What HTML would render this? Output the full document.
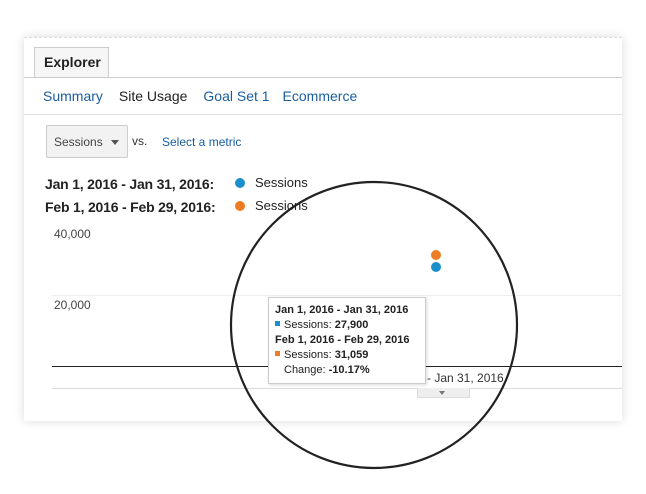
<!DOCTYPE html>
<html><head><style>
body{margin:0;width:646px;height:494px;background:#fff;font-family:"Liberation Sans",sans-serif;position:relative;overflow:hidden}
.a{position:absolute}
.card{left:24px;top:37px;width:598px;height:383px;background:#fff;box-shadow:0 0 10px rgba(0,0,0,.15);border-top:1px dashed #ddd}
.b{font-weight:bold;color:#222}
.lk{color:#1a5ea0}
</style></head><body>
<div class="a card"></div>
<div class="a" style="left:34px;top:47px;width:73px;height:30px;border:1px solid #ccc;border-bottom:none;background:#f6f6f6"></div>
<div class="a b" style="left:44px;top:54px;font-size:14px">Explorer</div>
<div class="a" style="left:24px;top:77px;width:598px;border-top:1px solid #ccc"></div>
<div class="a" style="left:43px;top:88px;font-size:14px"><span class="lk">Summary</span><span style="margin-left:16px;color:#222">Site Usage</span><span class="lk" style="margin-left:16px">Goal Set 1</span><span class="lk" style="margin-left:13px">Ecommerce</span></div>
<div class="a" style="left:24px;top:114px;width:598px;border-top:1px solid #ddd"></div>
<div class="a" style="left:46px;top:125px;width:80px;height:31px;border:1px solid #ccc;border-radius:2px;background:#f2f2f2"></div>
<div class="a" style="left:54px;top:135px;font-size:12px;color:#444">Sessions</div>
<div class="a" style="left:111px;top:140px;border:4px solid transparent;border-top:5px solid #555;width:0;height:0"></div>
<div class="a" style="left:132px;top:134px;font-size:12px;color:#333">vs.</div>
<div class="a lk" style="left:162px;top:135px;font-size:12px">Select a metric</div>
<div class="a b" style="left:45px;top:176px;font-size:14px;letter-spacing:-0.2px">Jan 1, 2016 - Jan 31, 2016:</div>
<div class="a b" style="left:45px;top:199px;font-size:14px;letter-spacing:-0.2px">Feb 1, 2016 - Feb 29, 2016:</div>
<div class="a" style="left:235px;top:178px;width:10px;height:10px;border-radius:50%;background:#1b8fcc"></div>
<div class="a" style="left:235px;top:201px;width:10px;height:10px;border-radius:50%;background:#ec7d22"></div>
<div class="a" style="left:255px;top:175px;font-size:13px;color:#222">Sessions</div>
<div class="a" style="left:255px;top:198px;font-size:13px;color:#222">Sessions</div>
<div class="a" style="left:54px;top:227px;font-size:12px;color:#444">40,000</div>
<div class="a" style="left:54px;top:298px;font-size:12px;color:#444">20,000</div>
<div class="a" style="left:52px;top:295px;width:570px;border-top:1px solid #eee"></div>
<div class="a" style="left:52px;top:366px;width:570px;border-top:1px solid #222"></div>
<div class="a" style="left:52px;top:388px;width:570px;border-top:1px solid #ddd"></div>
<div class="a" style="left:427px;top:371px;font-size:12px;color:#333">- Jan 31, 2016</div>
<div class="a" style="left:417px;top:388px;width:51px;height:9px;background:#eee;border:1px solid #ddd;border-top:none"></div>
<div class="a" style="left:439px;top:391px;border:3px solid transparent;border-top:4px solid #777;width:0;height:0"></div>
<div class="a" style="left:431px;top:250px;width:10px;height:10px;border-radius:50%;background:#ec7d22"></div>
<div class="a" style="left:431px;top:262px;width:10px;height:10px;border-radius:50%;background:#1b8fcc"></div>
<div class="a" style="left:268px;top:297px;width:156px;height:85px;background:#fff;border:1px solid #ccc;box-shadow:1px 1px 3px rgba(0,0,0,.15)"></div>
<div class="a" style="left:275px;top:303px;font-size:11px;line-height:15px;color:#222">
<div class="b">Jan 1, 2016 - Jan 31, 2016</div>
<div><span style="display:inline-block;width:5px;height:5px;background:#1b8fcc;margin:0 4px 2px 0"></span>Sessions: <b>27,900</b></div>
<div class="b">Feb 1, 2016 - Feb 29, 2016</div>
<div><span style="display:inline-block;width:5px;height:5px;background:#ec7d22;margin:0 4px 2px 0"></span>Sessions: <b>31,059</b></div>
<div style="padding-left:9px">Change: <b>-10.17%</b></div>
</div>
<svg class="a" style="left:0;top:0" width="646" height="494"><circle cx="374" cy="325" r="143" fill="none" stroke="#222" stroke-width="2.2"/></svg>
</body></html>
